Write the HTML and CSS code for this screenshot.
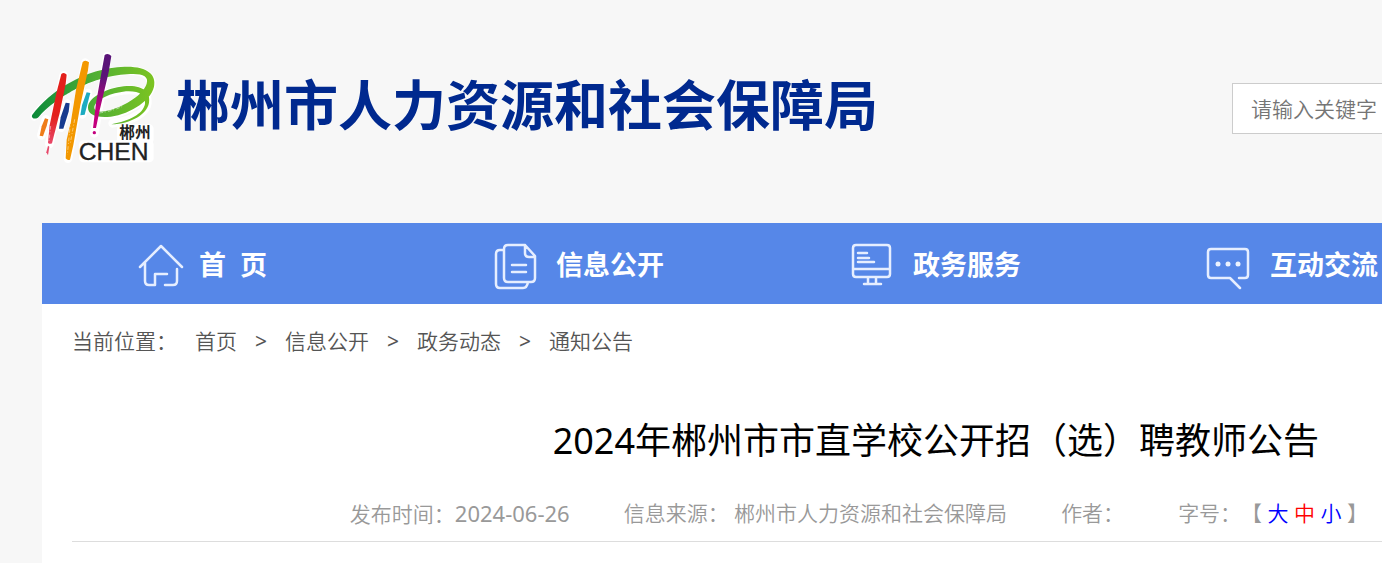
FILE: index.html
```html
<!DOCTYPE html>
<html lang="zh">
<head>
    <meta charset="UTF-8">
    <meta name="viewport" content="width=device-width, initial-scale=1.0">
    <title>2024年郴州市市直学校公开招（选）聘教师公告</title>
    <link rel="stylesheet" href="styles.css">
</head>
<body>
    <header class="header">
        <svg class="logo" viewBox="0 0 450 390" role="img" aria-label="郴州">
            <defs>
                <linearGradient id="green" x1="0" y1="0" x2="1" y2="0">
                    <stop offset="0" stop-color="#0a8a3a"/>
                    <stop offset="0.5" stop-color="#4fae35"/>
                    <stop offset="1" stop-color="#7cc421"/>
                </linearGradient>
                <linearGradient id="purple" x1="0" y1="0" x2="0" y2="1">
                    <stop offset="0.3" stop-color="#5a1478"/>
                    <stop offset="0.75" stop-color="#c4007e"/>
                </linearGradient>
                <linearGradient id="red" x1="0" y1="0" x2="0" y2="1">
                    <stop offset="0.6" stop-color="#e3201b"/>
                    <stop offset="1" stop-color="#e8486a"/>
                </linearGradient>
            </defs>
            <!-- 白色描边 -->
            <g class="halo">
                <path d="M43 217C105 140 225 82 322 80C382 78 407 105 388 141C364 187 279 222 236 211C198 200 208 164 260 150C330 128 387 135 382 178C378 207 340 229 278 238"/>
                <path d="M131 94L88 300M196 56L144 344M262 36L223 268M204 147L187 211M142 179L123 251M78 226L64 274"/>
                <path d="M190 302H388V342H190ZM304 254H388V286H304Z"/>
            </g>
            <path fill="url(#green)" d="M37 212C88 143 193 72 314 68C382 66 410 92 402 128C392 174 318 216 262 219C222 221 203 209 204 190C206 158 262 133 311 127C366 121 393 143 387 176C381 211 334 239 274 241C330 230 369 210 375 180C379 151 353 138 309 143C264 148 225 170 223 189C222 203 239 207 268 199C318 185 370 151 380 119C388 95 363 87 321 91C220 96 109 158 56 219C47 229 31 222 37 212Z"/>
            <path class="brush" d="M108 174Q165 130 239 108M238 207Q280 201 312 185M338 207Q365 193 371 179"/>
            <path fill="url(#red)" d="M124 90Q132 83 140 92L137 120L119 207L96 298Q88 302 84 296L89 244L109 148Z"/>
            <path fill="#f39800" d="M188 54Q197 46 207 55L204 79L181 184L160 303L150 347Q142 350 137 343L140 287L153 230L168 137Z"/>
            <path fill="url(#purple)" d="M254 33Q264 26 274 36L266 85L239 199L228 252L219 252L228 178L245 82Z"/>
            <circle cx="223" cy="266" r="5" fill="#c4007e"/>
            <path fill="#1cabc1" d="M200 145L211 147L207 162L194 212L181 214L186 184Z"/>
            <path fill="#173b8f" d="M137 176L149 178L146 203L130 254L117 254L122 220Z"/>
            <path fill="#ef7d1a" d="M75 223L85 226L80 246L69 277L59 275L65 247Z"/>
            <path fill="#e8486a" d="M84 305L88 308L84 334L79 325Z"/>
            <path class="brush" d="M152 229L142 333M164 226L151 297M92 246L87 291"/>
            <text class="logo-cn" x="298" y="283">郴州</text>
            <text class="logo-en" x="176" y="347">CHEN</text>
        </svg>
        <h1 class="site-name">郴州市人力资源和社会保障局</h1>
        <input class="search" type="text" placeholder="请输入关键字" aria-label="请输入关键字">
    </header>

    <div class="container">
        <nav class="nav">
            <a class="nav-item" href="#">
                <svg class="icon" viewBox="0 0 44 44">
                    <path d="M2 23L23 2L44 23M7 19V37Q7 41 11 41H17V30H29M39 25V37Q39 41 35 41H27"/>
                </svg>
                <span>首&nbsp; 页</span>
            </a>
            <a class="nav-item" href="#">
                <svg class="icon" viewBox="0 0 44 44">
                    <path d="M13 1H30L40 12V34Q40 38 36 38H13Q9 38 9 34V5Q9 1 13 1ZM30 1V9Q30 13 34 13H40M9 6H5Q1 6 1 10V40Q1 44 5 44H28Q32 44 33 38M17 21H31M17 28H31"/>
                </svg>
                <span>信息公开</span>
            </a>
            <a class="nav-item" href="#">
                <svg class="icon" viewBox="0 0 44 44">
                    <path d="M4 1H35Q38 1 38 4V30Q38 33 35 33H4Q1 33 1 30V4Q1 1 4 1ZM1 25H38M6 9H15M6 14H17M6 18H22M16 33V39M24 33V39M12 40H29"/>
                </svg>
                <span>政务服务</span>
            </a>
            <a class="nav-item" href="#">
                <svg class="icon" viewBox="0 0 44 44">
                    <path d="M30 34H36Q39 34 39 31V8Q39 5 36 5H2Q-1 5 -1 8V31Q-1 34 2 34H21L31 44"/>
                    <g class="dots">
                        <circle cx="9" cy="20" r="2.5"/>
                        <circle cx="19" cy="20" r="2.5"/>
                        <circle cx="29" cy="20" r="2.5"/>
                    </g>
                </svg>
                <span>互动交流</span>
            </a>
        </nav>

        <main class="content">
            <div class="breadcrumb">
                <span>当前位置：</span>
                <a href="#">首页</a>
                <span class="sep">&gt;</span>
                <a href="#">信息公开</a>
                <span class="sep">&gt;</span>
                <a href="#">政务动态</a>
                <span class="sep">&gt;</span>
                <a href="#">通知公告</a>
            </div>

            <h2 class="title">2024年郴州市市直学校公开招（选）聘教师公告</h2>

            <div class="meta">
                <span>发布时间：<span class="date">2024-06-26</span></span>
                <span>信息来源： 郴州市人力资源和社会保障局</span>
                <span>作者：</span>
                <span class="font-size">字号：【
                    <a href="#">大</a>
                    <a class="active" href="#">中</a>
                    <a href="#">小</a>
                    】</span>
            </div>
        </main>
    </div>
</body>
</html>
```

FILE: styles.css
```css
* {
    box-sizing: border-box;
}

body {
    margin: 0;
    min-height: 100vh;
    display: flex;
    flex-direction: column;
    background: #f7f7f7;
    font-family: "Noto Sans", "Noto Sans CJK SC", sans-serif;
    font-size: 21px;
    color: #555;
    overflow-x: hidden;
    text-spacing-trim: space-all;
}

a {
    color: inherit;
    text-decoration: none;
}

.header {
    display: flex;
    align-items: center;
    height: 223px;
    padding: 0 0 6px 20px;
}

.logo {
    flex: none;
    width: 150px;
    height: 130px;
}

.halo {
    fill: #fff;
    stroke: #fff;
    stroke-width: 26px;
    stroke-linecap: round;
    stroke-linejoin: round;
}

.halo path:not(:last-child) {
    fill: none;
}

.brush {
    fill: none;
    stroke: #fff;
    stroke-width: 2px;
    stroke-dasharray: 11 5 3 7;
    opacity: 0.7;
}

.logo-cn {
    font-family: "Noto Sans CJK SC", sans-serif;
    font-size: 47px;
    font-weight: 700;
    fill: #222;
}

.logo-en {
    font-family: "Liberation Sans", Arial, sans-serif;
    font-size: 74px;
    fill: #222;
    stroke: #222;
    stroke-width: 1px;
}

.site-name {
    margin: 0 0 8px 6px;
    font-size: 54px;
    line-height: 72px;
    font-weight: 700;
    color: #00298f;
    white-space: nowrap;
}

.search {
    width: 150px;
    height: 51px;
    margin-left: auto;
    padding: 0 0 0 18px;
    border: 1px solid #ccc;
    border-right: 0;
    background: #fff;
    font: inherit;
    font-weight: 350;
}

.search::placeholder {
    color: #757575;
}

.container {
    flex: 1;
    margin-left: 42px;
    background: #fff;
}

.nav {
    display: flex;
    height: 81px;
    background: #5687e8;
    overflow: hidden;
}

.nav-item {
    flex: none;
    display: flex;
    align-items: center;
    gap: 17px;
    width: 357px;
    padding: 4px 0 0 96px;
    font-size: 27px;
    font-weight: 700;
    color: #fff;
    white-space: nowrap;
}

.nav-item span {
    padding-bottom: 4px;
}

.icon {
    width: 44px;
    height: 44px;
    fill: none;
    stroke: #e6eeff;
    stroke-width: 2.5px;
    stroke-linecap: round;
    stroke-linejoin: round;
    overflow: visible;
}

.dots {
    fill: #edf3ff;
    stroke: none;
}

.content {
    padding-left: 30px;
    font-weight: 350;
}

.breadcrumb {
    display: flex;
    gap: 18px;
    padding-top: 21px;
    line-height: 32px;
}

.sep {
    font-weight: 400;
}

.title {
    margin: 57px 63px 0 0;
    font-size: 36px;
    line-height: 54px;
    font-weight: 400;
    color: #000;
    text-align: right;
}

.meta {
    display: flex;
    justify-content: flex-end;
    gap: 54px;
    margin-top: 29px;
    padding: 0 14px 11px 0;
    border-bottom: 1px solid #ddd;
    line-height: 32px;
    color: #999;
    white-space: nowrap;
}

.date {
    font-size: 22px;
    font-weight: 400;
}

.font-size a {
    color: #00f;
}

.font-size a.active {
    color: #f00;
}
```
